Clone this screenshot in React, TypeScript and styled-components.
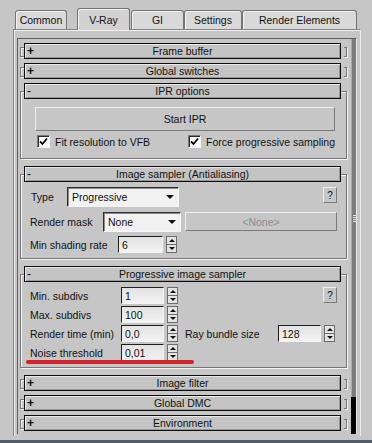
import styled, { createGlobalStyle } from "styled-components";

const GlobalStyle = createGlobalStyle`
  html, body {
    margin: 0;
    padding: 0;
    background: #c6c6c6;
  }
  body {
    font-family: "Liberation Sans", Arial, sans-serif;
    font-size: 10.5px;
    color: #111;
  }
`;

const Window = styled.div`
  width: 372px;
  height: 443px;
  display: flex;
  flex-direction: column;
  overflow: hidden;
  background: #c6c6c6;
`;

const TabBar = styled.div`
  display: flex;
  align-items: flex-end;
  height: 21px;
  padding: 8px 0 0 15px;
  position: relative;
  z-index: 2;
`;

const Tab = styled.div<{ $w: number; $gap?: number; $active?: boolean }>`
  box-sizing: border-box;
  width: ${(p) => p.$w}px;
  height: ${(p) => (p.$active ? 22 : 19)}px;
  margin-right: ${(p) => p.$gap ?? 0}px;
  margin-bottom: ${(p) => (p.$active ? -1 : 0)}px;
  display: flex;
  align-items: center;
  justify-content: center;
  border: 1px solid #747474;
  border-bottom: none;
  border-radius: 3px 3px 0 0;
  background: ${(p) => (p.$active ? "#d2d2d2" : "#d9d9d9")};
  box-shadow: inset 1px 1px 0 #f3f3f3;
`;

const Pane = styled.div`
  flex: 1;
  min-height: 0;
  display: flex;
  margin: 0 11px 0 13px;
  padding: 8px 3px 2px 3px;
  border: 1px solid #858585;
  border-bottom: none;
  border-right-color: #eeeeee;
  box-shadow: inset 1px 1px 0 #ededed;
`;

const Footer = styled.div`
  flex-shrink: 0;
  height: 7px;
  box-sizing: border-box;
  border-bottom: 3px solid #4f5d6a;
`;

const Scroller = styled.div`
  flex: 1;
  display: flex;
  overflow: hidden;
  border-top: 1px solid #5f5f5f;
  border-left: 1px solid #5f5f5f;
  border-right: 1px solid #e8e8e8;
`;

const RolloutList = styled.div`
  flex: 1;
  padding: 4px 3px 0 2px;
  overflow: hidden;
`;

const ScrollTrack = styled.div`
  width: 5px;
  flex-shrink: 0;
  background: #050505;
  display: flex;
  flex-direction: column;
`;

const ScrollThumb = styled.div`
  box-sizing: border-box;
  height: 358px;
  background: #7d7d7d;
  border-left: 1px solid #a9a9a9;
  display: flex;
  flex-direction: column;
  align-items: center;
  justify-content: center;
  gap: 1px;
`;

const Grip = styled.span`
  width: 3px;
  height: 1px;
  background: #e6e6e6;
`;

const Rollout = styled.div<{ $open?: boolean }>`
  position: relative;
  margin-bottom: ${(p) => (p.$open ? 7 : 4)}px;

  &::before,
  &::after {
    content: "";
    position: absolute;
    top: ${(p) => (p.$open ? 8 : 4)}px;
    bottom: ${(p) => (p.$open ? 0 : 2)}px;
    border: 1px solid #777;
  }
  &::before {
    left: 0;
    ${(p) => (p.$open ? "right: 1px;" : "width: 3px; border-right: none;")}
    box-shadow: inset 1px 1px 0 #f4f4f4, 1px 1px 0 #f4f4f4;
  }
  &::after {
    right: 1px;
    width: 2px;
    border-left: none;
    box-shadow: 1px 1px 0 #f4f4f4;
    display: ${(p) => (p.$open ? "none" : "block")};
  }
`;

const Header = styled.div`
  position: relative;
  z-index: 1;
  box-sizing: border-box;
  height: 16px;
  margin: 0 7px 0 4px;
  display: flex;
  align-items: center;
  border: 1px solid #0d0d0d;
  background: #c4c4c4;
  box-shadow: inset 1px 1px 0 #e9e9e9, inset -1px -1px 0 #979797;
`;

const Sign = styled.span<{ $open?: boolean }>`
  width: 13px;
  padding-left: 2px;
  font-size: 12px;
  font-weight: ${(p) => (p.$open ? "normal" : "bold")};
  line-height: 1;
`;

const Title = styled.span`
  flex: 1;
  text-align: center;
  white-space: nowrap;
`;

const Spacer = styled.span`
  width: 15px;
`;

const Body = styled.div<{ $pad: string }>`
  position: relative;
  padding: ${(p) => p.$pad};
  display: flex;
  flex-direction: column;
`;

const Row = styled.div<{ $gap?: number }>`
  display: flex;
  align-items: center;
  margin-top: ${(p) => p.$gap ?? 0}px;
`;

const Label = styled.span<{ $w: number; $ml?: number }>`
  width: ${(p) => p.$w}px;
  margin-left: ${(p) => p.$ml ?? 0}px;
  flex-shrink: 0;
  white-space: nowrap;
`;

const RaisedButton = styled.div<{ $w?: number; $h: number; $dim?: boolean; $ml?: number }>`
  box-sizing: border-box;
  width: ${(p) => (p.$w ? `${p.$w}px` : "auto")};
  height: ${(p) => p.$h}px;
  margin-left: ${(p) => p.$ml ?? 0}px;
  align-self: flex-start;
  display: flex;
  align-items: center;
  justify-content: center;
  background: #c6c6c6;
  border: 1px solid;
  border-color: #efefef #7b7b7b #7b7b7b #efefef;
  color: ${(p) => (p.$dim ? "#8c8c8c" : "#111")};
`;

const WideButton = styled(RaisedButton)`
  align-self: stretch;
`;

const Help = styled(RaisedButton)`
  margin-left: auto;
  width: 14px;
  height: 16px;
  font-size: 10px;
`;

const Select = styled.div<{ $w: number }>`
  box-sizing: border-box;
  width: ${(p) => p.$w}px;
  height: 20px;
  flex-shrink: 0;
  display: flex;
  align-items: center;
  justify-content: space-between;
  padding: 0 4px 0 4px;
  background: #f2f2f2;
  border: 1px solid;
  border-color: #2e2e2e #f6f6f6 #f6f6f6 #2e2e2e;
  box-shadow: inset 1px 1px 0 #8c8c8c;

  &::after {
    content: "";
    border-left: 4px solid transparent;
    border-right: 4px solid transparent;
    border-top: 4px solid #111;
  }
`;

const Field = styled.div<{ $w: number }>`
  box-sizing: border-box;
  width: ${(p) => p.$w}px;
  height: 17px;
  flex-shrink: 0;
  display: flex;
  align-items: center;
  padding-left: 3px;
  background: linear-gradient(#e2e2e2, #f3f3f3);
  border: 1px solid;
  border-color: #1e1e1e #f4f4f4 #f4f4f4 #1e1e1e;
`;

const Arrows = styled.div`
  box-sizing: border-box;
  width: 11px;
  height: 17px;
  margin-left: 3px;
  flex-shrink: 0;
  display: flex;
  flex-direction: column;
  border: 1px solid #6c6c6c;
  background: #e4e4e4;
`;

const ArrowHalf = styled.div<{ $down?: boolean }>`
  flex: 1;
  display: flex;
  align-items: center;
  justify-content: center;
  & + & {
    border-top: 1px solid #6c6c6c;
  }
  &::after {
    content: "";
    border-left: 3px solid transparent;
    border-right: 3px solid transparent;
    ${(p) => (p.$down ? "border-top" : "border-bottom")}: 3px solid #111;
  }
`;

const CheckRow = styled.div`
  display: flex;
  align-items: center;
  margin-top: 4px;
  padding-left: 2px;
  height: 13px;
`;

const CheckItem = styled.div<{ $w?: number }>`
  display: flex;
  align-items: center;
  width: ${(p) => (p.$w ? `${p.$w}px` : "auto")};
  white-space: nowrap;
`;

const CheckBox = styled.span`
  box-sizing: border-box;
  width: 13px;
  height: 13px;
  margin-right: 5px;
  display: flex;
  align-items: center;
  justify-content: center;
  background: #fff;
  border: 1px solid;
  border-color: #7a7a7a #f4f4f4 #f4f4f4 #7a7a7a;
  box-shadow: inset 1px 1px 0 #2a2a2a;
`;

const Marker = styled.div`
  position: absolute;
  left: 6px;
  top: 78px;
  width: 168px;
  height: 4px;
  border-radius: 2px;
  background: #d3232c;
`;

function Check({ label, w }: { label: string; w?: number }) {
  return (
    <CheckItem $w={w}>
      <CheckBox>
        <svg width="9" height="9" viewBox="0 0 9 9">
          <path d="M1 4.5 L3.5 7 L8 1.5" fill="none" stroke="#000" strokeWidth="1.8" />
        </svg>
      </CheckBox>
      {label}
    </CheckItem>
  );
}

function Spinner({ w, value }: { w: number; value: string }) {
  return (
    <>
      <Field $w={w}>{value}</Field>
      <Arrows>
        <ArrowHalf />
        <ArrowHalf $down />
      </Arrows>
    </>
  );
}

function RolloutHead({ title, open }: { title: string; open?: boolean }) {
  return (
    <Header>
      <Sign $open={open}>{open ? "-" : "+"}</Sign>
      <Title>{title}</Title>
      <Spacer />
    </Header>
  );
}

const tabs = [
  { name: "Common", w: 52, gap: 10 },
  { name: "V-Ray", w: 53, gap: 1, active: true },
  { name: "GI", w: 53, gap: 0 },
  { name: "Settings", w: 58, gap: 0 },
  { name: "Render Elements", w: 115, gap: 0 },
];

export default function App() {
  return (
    <Window>
      <GlobalStyle />
      <TabBar>
        {tabs.map((t) => (
          <Tab key={t.name} $w={t.w} $gap={t.gap} $active={t.active}>
            {t.name}
          </Tab>
        ))}
      </TabBar>
      <Pane>
        <Scroller>
          <RolloutList>
            <Rollout>
              <RolloutHead title="Frame buffer" />
            </Rollout>
            <Rollout>
              <RolloutHead title="Global switches" />
            </Rollout>
            <Rollout $open>
              <RolloutHead title="IPR options" open />
              <Body $pad="8px 13px 11px 15px">
                <WideButton $h={24}>Start IPR</WideButton>
                <CheckRow>
                  <Check label="Fit resolution to VFB" w={153} />
                  <Check label="Force progressive sampling" />
                </CheckRow>
              </Body>
            </Rollout>
            <Rollout $open>
              <RolloutHead title="Image sampler (Antialiasing)" open />
              <Body $pad="5px 11px 6px 10px">
                <Row>
                  <Label $w={36} $ml={1}>Type</Label>
                  <Select $w={112}>Progressive</Select>
                  <Help $h={16}>?</Help>
                </Row>
                <Row $gap={5}>
                  <Label $w={73}>Render mask</Label>
                  <Select $w={78}>None</Select>
                  <RaisedButton $w={153} $h={19} $ml={4} $dim>
                    &lt;None&gt;
                  </RaisedButton>
                </Row>
                <Row $gap={4}>
                  <Label $w={88}>Min shading rate</Label>
                  <Spinner w={45} value="6" />
                </Row>
              </Body>
            </Rollout>
            <Rollout $open>
              <RolloutHead title="Progressive image sampler" open />
              <Body $pad="5px 11px 7px 10px">
                <Row>
                  <Label $w={91}>Min. subdivs</Label>
                  <Spinner w={43} value="1" />
                  <Help $h={16}>?</Help>
                </Row>
                <Row $gap={2}>
                  <Label $w={91}>Max. subdivs</Label>
                  <Spinner w={43} value="100" />
                </Row>
                <Row $gap={2}>
                  <Label $w={91}>Render time (min)</Label>
                  <Spinner w={43} value="0,0" />
                  <Label $w={93} $ml={7}>Ray bundle size</Label>
                  <Spinner w={43} value="128" />
                </Row>
                <Row $gap={2}>
                  <Label $w={91}>Noise threshold</Label>
                  <Spinner w={43} value="0,01" />
                </Row>
                <Marker />
              </Body>
            </Rollout>
            <Rollout>
              <RolloutHead title="Image filter" />
            </Rollout>
            <Rollout>
              <RolloutHead title="Global DMC" />
            </Rollout>
            <Rollout>
              <RolloutHead title="Environment" />
            </Rollout>
          </RolloutList>
          <ScrollTrack>
            <ScrollThumb>
              <Grip />
              <Grip />
              <Grip />
              <Grip />
            </ScrollThumb>
          </ScrollTrack>
        </Scroller>
      </Pane>
      <Footer />
    </Window>
  );
}
